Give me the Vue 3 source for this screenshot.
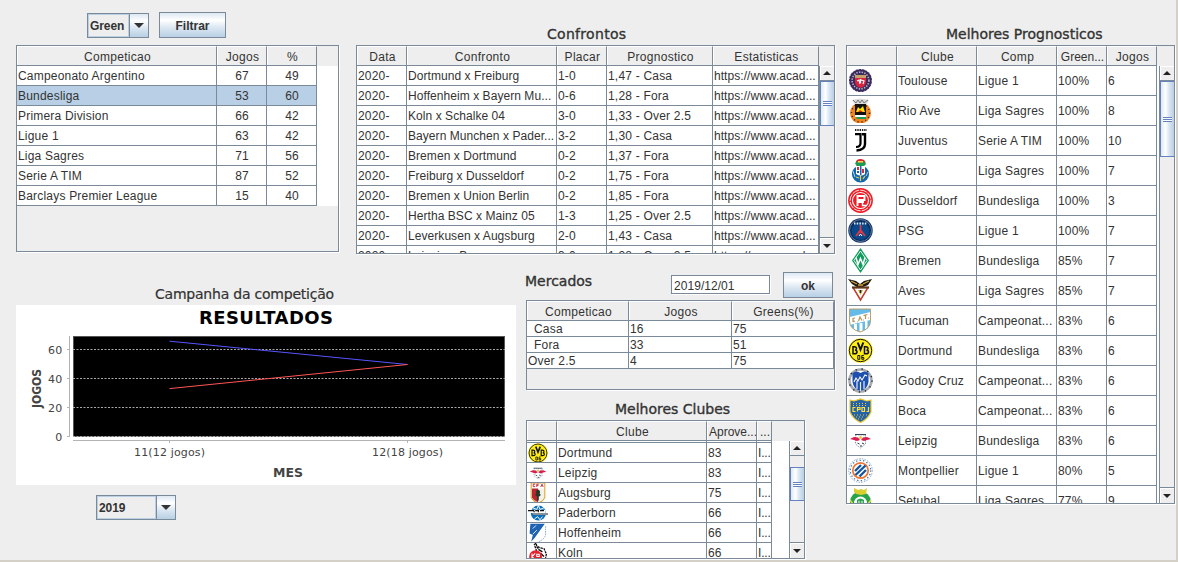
<script setup>
const competitions = [
  ['Campeonato Argentino', 67, 49],
  ['Bundesliga', 53, 60],
  ['Primera Division', 66, 42],
  ['Ligue 1', 63, 42],
  ['Liga Sagres', 71, 56],
  ['Serie A TIM', 87, 52],
  ['Barclays Premier League', 15, 40],
]

const matches = [
  ['Dortmund x Freiburg', '1-0', '1,47 - Casa'],
  ['Hoffenheim x Bayern Mu...', '0-6', '1,28 - Fora'],
  ['Koln x Schalke 04', '3-0', '1,33 - Over 2.5'],
  ['Bayern Munchen x Pader...', '3-2', '1,30 - Casa'],
  ['Bremen x Dortmund', '0-2', '1,37 - Fora'],
  ['Freiburg x Dusseldorf', '0-2', '1,75 - Fora'],
  ['Bremen x Union Berlin', '0-2', '1,85 - Fora'],
  ['Hertha BSC x Mainz 05', '1-3', '1,25 - Over 2.5'],
  ['Leverkusen x Augsburg', '2-0', '1,43 - Casa'],
  ['Leipzig x Bremen', '3-0', '1,28 - Over 2.5'],
]

const tips = [
  ['toulouse', 'Toulouse', 'Ligue 1', '100%', 6],
  ['rioave', 'Rio Ave', 'Liga Sagres', '100%', 8],
  ['juventus', 'Juventus', 'Serie A TIM', '100%', 10],
  ['porto', 'Porto', 'Liga Sagres', '100%', 7],
  ['dusseldorf', 'Dusseldorf', 'Bundesliga', '100%', 3],
  ['psg', 'PSG', 'Ligue 1', '100%', 7],
  ['bremen', 'Bremen', 'Bundesliga', '85%', 7],
  ['aves', 'Aves', 'Liga Sagres', '85%', 7],
  ['tucuman', 'Tucuman', 'Campeonat...', '83%', 6],
  ['dortmund', 'Dortmund', 'Bundesliga', '83%', 6],
  ['godoy', 'Godoy Cruz', 'Campeonat...', '83%', 6],
  ['boca', 'Boca', 'Campeonat...', '83%', 6],
  ['leipzig', 'Leipzig', 'Bundesliga', '83%', 6],
  ['montpellier', 'Montpellier', 'Ligue 1', '80%', 5],
  ['setubal', 'Setubal', 'Liga Sagres', '77%', 9],
]

const markets = [
  ['Casa', 16, 75],
  ['Fora', 33, 51],
  ['Over 2.5', 4, 75],
]

const clubs = [
  ['dortmund', 'Dortmund', 83],
  ['leipzig', 'Leipzig', 83],
  ['augsburg', 'Augsburg', 75],
  ['paderborn', 'Paderborn', 66],
  ['hoffenheim', 'Hoffenheim', 66],
  ['koln', 'Koln', 66],
]

const ticks = [
  [60, 44.5, 49],
  [40, 73.5, 78],
  [20, 102.5, 107],
  [0, 131.5, 136],
]
</script>

<template>
  <div class="window">
    <svg class="defs" width="0" height="0">
      <symbol id="toulouse" viewBox="0 0 25 25">
        <circle cx="12.5" cy="12.5" r="11.500" fill="#3b2a5c" />
        <circle cx="12.5" cy="12.5" r="11.500" fill="none" stroke="#fff" stroke-width="1" stroke-dasharray="1 2.4" />
        <circle cx="12.5" cy="12.5" r="8.4" fill="none" stroke="#b9b0c8" stroke-width="1.6" stroke-dasharray="1.4 1.3" />
        <path d="M7 7h11v7q0 4-5.5 6Q7 18 7 14z" fill="#d8243f" />
        <path d="M7 7h11v3H7z" fill="#c5a06a" />
        <path d="M9 13l2-1 1 4M13 12l3 1-1 3M12.500 11v4" stroke="#fff" stroke-width="1.200" fill="none" />
      </symbol>
      <symbol id="rioave" viewBox="0 0 25 25">
        <circle cx="12.500" cy="15" r="10.500" fill="#f08322" />
        <circle cx="12.500" cy="15" r="9" fill="none" stroke="#3a2208" stroke-width="1.400" stroke-dasharray="1 3" />
        <path d="M4 2q8-3 17 0l-3 5H7z" fill="#ddd" />
        <path d="M5 2l3 3 2-3 2 3 2-3 2 3 4-3" stroke="#777" fill="none" />
        <path d="M7 6h11v12H7z" fill="#111" />
        <path d="M8 14l2-5 2 2 3-3 2 6z" fill="#ffe000" />
        <path d="M10 14l2-2 3 2z" fill="#d22" />
        <path d="M7 17h11v2H7z" fill="#fff" />
        <path d="M8 19h10v2H9z" fill="#1c9a5b" />
      </symbol>
      <symbol id="juventus" viewBox="0 0 25 25">
        <path d="M7 2h12" stroke="#222" stroke-width="2" stroke-dasharray="1.400 .9" />
        <path d="M7 6.200H12.500V15Q12.500 19 8 19" fill="none" stroke="#000" stroke-width="2.200" />
        <path d="M14 6.200H17V16Q17 22 8.500 22.500" fill="none" stroke="#000" stroke-width="2.400" />
      </symbol>
      <symbol id="porto" viewBox="0 0 25 25">
        <circle cx="12.500" cy="16" r="8.600" fill="#1467a8" />
        <path d="M8 6q-1-5 5-5 6 1 4 6z" fill="#d5262e" />
        <path d="M7 5l3-2 3 2 3-2 2 3-3 3H9z" fill="#1e9c57" />
        <path d="M10 3h5v1.500h-5z" fill="#ffd84a" />
        <path d="M8 8h9v8q-4 3-9 0z" fill="#fff" />
        <path d="M9 9h2v3H9zM14 11h2v4h-2z" fill="#da2c36" />
        <path d="M12 8h1.500v9H12zM9 13h2v2H9z" fill="#1a60bf" />
        <path d="M12.500 17v6M8 19l3 1M17 18l-2 3" stroke="#e9cf5c" stroke-width="1.200" />
        <path d="M5 13l2 6M20 14l-2 4" stroke="#b7d6ec" />
      </symbol>
      <symbol id="dusseldorf" viewBox="0 0 25 25">
        <circle cx="12.500" cy="12.500" r="12.400" fill="#ee1c25" />
        <circle cx="12.500" cy="12.500" r="10.400" fill="none" stroke="#fff" stroke-width=".9" stroke-dasharray="7 1" />
        <circle cx="12.500" cy="12.500" r="8" fill="none" stroke="#fff" stroke-width="1.100" />
        <path d="M9.500 18V8H16.500v4h-6.500M10 14h6" fill="none" stroke="#fff" stroke-width="1.900" />
        <path d="M14.500 14v3.500h3.500" fill="none" stroke="#fff" stroke-width="1.400" />
      </symbol>
      <symbol id="psg" viewBox="0 0 25 25">
        <circle cx="12.500" cy="12.500" r="12.200" fill="#0e2d5c" />
        <circle cx="12.500" cy="12.500" r="11" fill="none" stroke="#7fa1c8" stroke-width=".7" />
        <circle cx="12.500" cy="13" r="9" fill="#08498b" />
        <path d="M6 5.500h13" stroke="#dbe5f0" stroke-width="2" stroke-dasharray="1.500 1.200" />
        <path d="M12.500 7v5L8 18M12.500 12l4.500 6M10 14.500h5" fill="none" stroke="#e9353f" stroke-width="1.700" />
        <path d="M11 18l1.500-2 1.500 2" stroke="#fff" fill="none" />
      </symbol>
      <symbol id="bremen" viewBox="0 0 25 25">
        <path d="M12.500 0L21 12.500 12.500 25 4 12.500z" fill="#109c5c" />
        <path d="M12.500 3L19 12.500 12.500 22 6 12.500z" fill="none" stroke="#fff" stroke-width=".9" />
        <path d="M8 9.500l2 7 2.500-6 2.500 6 2-7" fill="none" stroke="#fff" stroke-width="1.500" />
      </symbol>
      <symbol id="aves" viewBox="0 0 25 25">
        <path d="M0 1l8 2 4 3 4-3 8-2-4 6-5 2H9L4 6z" fill="#1a1712" />
        <path d="M3 3l6 3M21 3l-6 3M10 7h5" stroke="#d2a836" stroke-width="1.300" />
        <path d="M5 9.500h15L12.500 22z" fill="#fff" stroke="#c33b28" stroke-width="1.500" />
        <path d="M4 8.500h17v2H4z" fill="#5a3b1d" />
        <path d="M10 12h5l-2.500 5z" fill="#d6b02b" />
        <path d="M12.500 12v3" stroke="#222" stroke-width="1.500" />
      </symbol>
      <symbol id="tucuman" viewBox="0 0 25 25">
        <path d="M1.500 1h21v12q0 8-10.500 11Q1.500 21 1.500 13z" fill="#62bbe9" />
        <path d="M6 16h3v7l-3-2zM11.500 15h3v9h-3zM17 13h2.500v7L17 22z" fill="#fff" />
        <path d="M1.500 9L22.500 4v8L1.500 17z" fill="#fff" />
        <path d="M7 10l-2 .5v3l2-.5M10.500 13l1.500-4 2 3.500M15.500 7.500l4-1M17.500 7v4M9 14h.8M15 12h.8M20 10h.8" fill="none" stroke="#b5935b" stroke-width="1.200" />
        <path d="M1.500 1h21v12q0 8-10.500 11Q1.500 21 1.500 13z" fill="none" stroke="#b9a06f" />
      </symbol>
      <symbol id="dortmund" viewBox="0 0 25 25">
        <circle cx="12.500" cy="12.500" r="12.300" fill="#ffed18" />
        <circle cx="12.500" cy="12.500" r="11.200" fill="none" stroke="#111" stroke-width="1" />
        <path d="M5 8.800v7h1.500q2.500 0 2.500-1.800 0-1.700-2-1.700 1.500-.3 1.500-1.800t-2.200-1.700zM16.500 8.800v7h1.500q2.500 0 2.500-1.800 0-1.700-2-1.700 1.500-.3 1.500-1.800t-2.200-1.700z" fill="none" stroke="#111" stroke-width="1.500" />
        <path d="M9.700 4.500l2.800 7 2.800-7" fill="none" stroke="#111" stroke-width="2" />
        <path d="M9.800 17.500h2v3.800h-2zM13.800 21.300v-3.800h2M13.800 19.500h2v1.800h-2" fill="none" stroke="#111" stroke-width="1" />
      </symbol>
      <symbol id="godoy" viewBox="0 0 25 25">
        <circle cx="12.500" cy="12.500" r="11" fill="#fff" stroke="#a9adb3" stroke-width="2.600" />
        <circle cx="12.500" cy="12.500" r="11.500" fill="none" stroke="#222" stroke-width="1.400" stroke-dasharray="1.300 4.800" />
        <path d="M4.500 5q4-3 8 0 4-3 8 0v9q-1 7-8 9-7-2-8-9z" fill="#1d4fae" />
        <path d="M9 13v8M12.500 14v9M16 13v8" stroke="#e6ecf5" stroke-width="1.200" />
        <path d="M6 14l2-4 2 3 2-4 2 3 3-5 2 1" fill="none" stroke="#fff" stroke-width="1.100" />
      </symbol>
      <symbol id="boca" viewBox="0 0 25 25">
        <path d="M2 2l4 1 6.500-2L19 3l4-1v12q-3 7-10.500 10.500Q5 21 2 14z" fill="#2563a9" stroke="#ecc931" stroke-width="1.200" />
        <path d="M5 5.500h15M5 7.500h15M6 17h13M8 19h9M10 21h5" stroke="#ecc931" stroke-dasharray="1 2" />
        <path d="M7.500 9.500H5v4h2.500M9.500 13.500v-4H12v2H9.500M14 9.500v4h2.500v-4zM20.500 9v4.500H18.500" fill="none" stroke="#ffe044" stroke-width="1.200" />
      </symbol>
      <symbol id="leipzig" viewBox="0 0 25 25">
        <path d="M7.500 7h10v9l-5 4-5-4z" fill="#fff" stroke="#8f99ab" stroke-dasharray="1.500 1" />
        <path d="M7 6.500h11" stroke="#34465f" />
        <path d="M2 11l4-2 4 .5 2 2.500-3 1-3-1zM23 11l-4-2-4 .5-2 2.500 3 1 3-1z" fill="#d91d4e" />
        <circle cx="12.500" cy="9.500" r="1.500" fill="#f3c546" />
        <path d="M9.500 15l2 1M14 15l2 1M12 18h2" stroke="#23344e" />
      </symbol>
      <symbol id="montpellier" viewBox="0 0 25 25">
        <circle cx="12.500" cy="12.500" r="11.800" fill="#fff" stroke="#8aa9cc" stroke-width="1" stroke-dasharray="1.500 1.200" />
        <circle cx="12.500" cy="12.500" r="10.200" fill="none" stroke="#3e6ea4" stroke-width="1.200" stroke-dasharray="1.300 2.300" />
        <circle cx="12.500" cy="12.500" r="7.700" fill="#fff" stroke="#ee742e" stroke-width="1.700" />
        <path d="M7 13l6-6M7.500 17l10-9.500M11.500 18.500l6.500-6.500" stroke="#14569e" stroke-width="2.400" />
      </symbol>
      <symbol id="setubal" viewBox="0 0 25 25">
        <circle cx="12.500" cy="14" r="10.500" fill="#28a34a" />
        <path d="M0 7l6-5M25 7l-6-5" stroke="#fff" stroke-width="3" />
        <path d="M6 0l4 2 3-1 3 1 3-2-1 6-5 1-5-1-2-2z" fill="#d9cf2f" />
        <circle cx="12.500" cy="15" r="6.500" fill="#fff" />
        <path d="M9 12q3.500-3 7 0v5q-3 3-7 0z" fill="#2fa653" />
        <path d="M11 13v5M14 13v5" stroke="#fff" />
        <path d="M2 12l3 4M23 12l-3 4M4 20l3-2M21 20l-3-2" stroke="#e2dc54" stroke-width="1.500" />
      </symbol>
      <symbol id="augsburg" viewBox="0 0 25 25">
        <path d="M4 0h17v18q-2 5-8.500 7Q6 23 4 18z" fill="#fff" stroke="#dba63a" stroke-width="1.400" />
        <path d="M5 7h7.500v17Q7 22 5 18z" fill="#b82633" />
        <path d="M12.500 7H20v11q-2 4-7.500 6z" fill="#f4f1e6" />
        <path d="M9 1.500H6.500v3H9M11 5V1.500h2.500M11 3h2M16 5l1.500-3.500L19 5" fill="none" stroke="#c72b3c" stroke-width="1.200" />
        <path d="M12.500 8q4 2 2 5 3 2-1 4v5h-2v-5q-4-2-1-4-2-3 2-5z" fill="#24382a" />
      </symbol>
      <symbol id="paderborn" viewBox="0 0 25 25">
        <circle cx="13" cy="12.500" r="9.500" fill="#0c6fb9" />
        <path d="M6 6l5 2 2-5 2 5 5-2M8 20l4-3 3 4 3-4" fill="none" stroke="#fff" stroke-width="1.200" />
        <path d="M0 8.500h22v4H0z" fill="#fff" />
        <path d="M0 9.500h7l1 2M9 9.500h4v2M15 9.500h5" fill="none" stroke="#111" stroke-width="1.400" />
        <path d="M5 12.500h20v2.500H7z" fill="#8d9092" />
      </symbol>
      <symbol id="hoffenheim" viewBox="0 0 25 25">
        <path d="M3 1h18L8 19 4 23 6 15 2 13z" fill="#1e62b4" />
        <path d="M6 7l4-4M11 9l-5 5" stroke="#fff" stroke-width="1.100" />
        <path d="M22 4v11q-2 6-10 9" fill="none" stroke="#84a9d8" stroke-width="1.200" stroke-dasharray="2 1" />
      </symbol>
      <symbol id="koln" viewBox="0 0 25 25">
        <path d="M8 2l2-2 1 4 4 2 5 1 3 7-2 9h-5l-4-9z" fill="#fff" stroke="#111" stroke-width="1.600" stroke-dasharray="3 1" />
        <path d="M13 8l5 3M16 13l4 4M11 5l2 2" stroke="#111" stroke-width="1.800" />
        <circle cx="9.500" cy="17" r="8" fill="#e4232f" />
        <path d="M5 13v8M5 17l4-4M5 17l4 4M11 14h3v3h-3z" fill="none" stroke="#fff" stroke-width="1.300" />
      </symbol>
    </svg>

    <div class="main">
      <div class="top">
        <section class="filters">
          <div class="toolbar">
            <div class="combo combo-green"><span>Green</span><i class="drop"><b></b></i></div>
            <button class="btn btn-filter">Filtrar</button>
          </div>
          <div class="pane pane-comp">
            <div class="row head g-comp"><div>Competicao</div><div>Jogos</div><div>%</div></div>
            <div class="body">
              <div class="rows">
                <div v-for="(c, i) in competitions" :key="c[0]" class="row g-comp" :class="{ selected: i === 1 }">
                  <div>{{ c[0] }}</div><div class="mid">{{ c[1] }}</div><div class="mid">{{ c[2] }}</div>
                </div>
              </div>
            </div>
          </div>
        </section>

        <section class="matches">
          <h2>Confrontos</h2>
          <div class="pane pane-match">
            <div class="row head g-match">
              <div>Data</div><div>Confronto</div><div>Placar</div><div>Prognostico</div><div>Estatisticas</div>
            </div>
            <div class="body">
              <div class="rows">
                <div v-for="m in matches" :key="m[0]" class="row g-match">
                  <div>2020-</div><div class="fixture">{{ m[0] }}</div><div>{{ m[1] }}</div><div>{{ m[2] }}</div><div class="url">https://www.acad...</div>
                </div>
              </div>
              <div class="bar">
                <i class="arrow up"><b></b></i>
                <i class="thumb t-match"><b></b></i>
                <i class="arrow down"><b></b></i>
              </div>
            </div>
          </div>
        </section>
      </div>

      <div class="bottom">
        <section class="campaign">
          <h2>Campanha da competição</h2>
          <svg class="chart" width="500" height="180" viewBox="0 0 500 180">
            <rect width="500" height="180" fill="#fff" />
            <text x="183" y="19" class="title" textLength="134">RESULTADOS</text>
            <rect x="57.500" y="31.500" width="431" height="100" fill="#000" stroke="#555" />
            <g stroke="#a8a8a8" stroke-dasharray="2 1.500">
              <line v-for="t in ticks" :key="t[0]" x1="57" x2="489" :y1="t[1]" :y2="t[1]" />
            </g>
            <g stroke="#b4b4b4">
              <line v-for="t in ticks" :key="t[0]" x1="51" x2="54" :y1="t[1]" :y2="t[1]" />
              <path d="M53.500 31V132M57 135.500H489M153.500 136V138M391.500 136V138" fill="none" />
            </g>
            <path d="M153.500 36.200L391.500 59.500" stroke="#5555ff" stroke-width="1" />
            <path d="M153.500 83.600L391.500 59.500" stroke="#ff5555" stroke-width="1" />
            <text v-for="t in ticks" :key="t[0]" x="46.500" :y="t[2]" class="tick end">{{ t[0] }}</text>
            <text x="118" y="151" class="tick" textLength="71">11(12 jogos)</text>
            <text x="356" y="151" class="tick" textLength="71">12(18 jogos)</text>
            <text x="257" y="172" class="axis" textLength="30" lengthAdjust="spacingAndGlyphs">MES</text>
            <text transform="translate(25 103) rotate(-90)" class="axis" textLength="39" lengthAdjust="spacingAndGlyphs">JOGOS</text>
          </svg>
          <div class="combo combo-year"><span>2019</span><i class="drop"><b></b></i></div>
        </section>

        <section class="side">
          <div class="market-bar">
            <h2>Mercados</h2>
            <div class="field">2019/12/01</div>
            <button class="btn btn-ok">ok</button>
          </div>
          <div class="pane pane-market">
            <div class="row head g-market"><div>Competicao</div><div>Jogos</div><div>Greens(%)</div></div>
            <div class="body">
              <div class="rows">
                <div v-for="(m, i) in markets" :key="m[0]" class="row r16 g-market">
                  <div :class="{ indent: i < 2 }">{{ m[0] }}</div><div>{{ m[1] }}</div><div>{{ m[2] }}</div>
                </div>
              </div>
            </div>
          </div>
          <h2 class="clubs-title">Melhores Clubes</h2>
          <div class="pane pane-clubs">
            <div class="row head g-clubs"><div></div><div>Clube</div><div class="tight">Aprove...</div><div class="tight">...</div></div>
            <div class="body">
              <div class="rows">
                <div class="row sliver g-clubs"><div></div><div></div><div></div><div></div></div>
                <div v-for="c in clubs" :key="c[1]" class="row g-clubs">
                  <div><svg class="crest small"><use :href="'#' + c[0]" /></svg></div>
                  <div>{{ c[1] }}</div><div>{{ c[2] }}</div><div class="dots">I...</div>
                </div>
              </div>
              <div class="bar">
                <i class="arrow up"><b></b></i>
                <i class="thumb t-clubs"><b></b></i>
                <i class="arrow down"><b></b></i>
              </div>
            </div>
          </div>
        </section>
      </div>
    </div>

    <section class="tips">
      <h2>Melhores Prognosticos</h2>
      <div class="pane pane-tips">
        <div class="row head g-tips"><div></div><div>Clube</div><div>Comp</div><div class="tight">Green...</div><div>Jogos</div></div>
        <div class="body">
          <div class="rows">
            <div v-for="t in tips" :key="t[1]" class="row r30 g-tips">
              <div><svg class="crest"><use :href="'#' + t[0]" /></svg></div>
              <div>{{ t[1] }}</div><div>{{ t[2] }}</div><div>{{ t[3] }}</div><div>{{ t[4] }}</div>
            </div>
          </div>
          <div class="bar">
            <i class="arrow up"><b></b></i>
            <i class="thumb t-tips"><b></b></i>
            <i class="arrow down"><b></b></i>
          </div>
        </div>
      </div>
    </section>
  </div>
</template>

<style>
body { margin: 0; overflow: hidden; }
</style>

<style scoped>
.window {
  box-sizing: border-box;
  display: flex;
  width: 1178px;
  height: 562px;
  overflow: hidden;
  background: #eee;
  border-right: 2px solid #d4d0c8;
  border-bottom: 2px solid #d4d0c8;
  color: #333;
  font: 12px "Liberation Sans", Arial, sans-serif;
  letter-spacing: 0.2px;
}
.defs { width: 0; height: 0; flex: none; display: block; }
.main { width: 835px; flex: none; }
.top { display: flex; height: 254px; }
.bottom { display: flex; }
.filters { width: 323px; margin-left: 16px; }
.matches { width: 479px; margin-left: 17px; }
.campaign { width: 500px; margin-left: 16px; }
.side { width: 309px; margin-left: 10px; }
.tips { width: 329px; margin-left: 11px; }

h2 {
  margin: 0;
  height: 21px;
  font: 14px/20px "DejaVu Sans", sans-serif;
  letter-spacing: 0;
  -webkit-text-stroke: 0.35px #333;
  white-space: nowrap;
}
.matches h2 { padding: 24px 0 0 191px; letter-spacing: 0.3px; }
.tips h2 { padding: 24px 0 0 100px; }
.campaign h2 { padding: 30px 0 0 139px; letter-spacing: -0.22px; -webkit-text-stroke-width: 0.2px; }
.clubs-title { padding: 9px 0 0 89px; }

.toolbar {
  box-sizing: border-box;
  display: flex;
  gap: 10px;
  height: 45px;
  padding: 12px 0 0 71px;
}
.btn {
  box-sizing: border-box;
  height: 26px;
  padding: 1px 0 0;
  border: 1px solid #7a8a99;
  background: linear-gradient(#dde8f3, #fff 30%, #dce7f2 60%, #b8cfe5);
  color: #333;
  font: bold 12px "Liberation Sans", Arial, sans-serif;
}
.btn-filter { width: 67px; }
.btn-ok { width: 50px; margin-left: 13px; margin-top: 18px; }
.combo {
  box-sizing: border-box;
  display: flex;
  height: 25px;
  border: 1px solid #7a8a99;
  font-weight: bold;
  letter-spacing: -0.1px;
}
.combo span {
  box-sizing: border-box;
  flex: 1;
  border: 1px solid #b8cfe5;
  padding-left: 1px;
  line-height: 22px;
}
.combo-green { width: 62px; margin-top: 1px; }
.combo-year { width: 80px; margin: 10px 0 0 80px; }
.drop {
  display: flex;
  align-items: center;
  justify-content: center;
  width: 18px;
  border-left: 1px solid #7a8a99;
  background: linear-gradient(#dde8f3, #fff 30%, #dce7f2 60%, #b8cfe5);
}
.drop b {
  border: 5px solid transparent;
  border-top-color: #333;
  border-bottom: 0;
}

.pane {
  box-sizing: border-box;
  display: flex;
  flex-direction: column;
  border: 1px solid #7a8a99;
  box-shadow: 1px 1px 0 #fff;
}
.pane-comp { height: 207px; }
.pane-match { height: 209px; }
.pane-market { height: 90px; }
.pane-clubs { width: 279px; height: 139px; }
.pane-tips { height: 459px; }
.body { display: flex; flex: 1; min-height: 0; overflow: hidden; }
.rows { flex: 1; align-self: flex-start; background: #fff; }
.row { display: grid; grid-auto-rows: 20px; }
.row > div {
  box-sizing: border-box;
  overflow: hidden;
  padding-left: 1px;
  border-right: 1px solid #7a8a99;
  border-bottom: 1px solid #7a8a99;
  line-height: 21px;
  white-space: nowrap;
}
.r30 { grid-auto-rows: 30px; }
.r30 > div { line-height: 31px; }
.r16 { grid-auto-rows: 16px; }
.r16 > div { line-height: 17px; }
.sliver { grid-auto-rows: 2px; }
.head > div {
  padding-left: 2px;
  border-top: 1px solid #fff;
  box-shadow: inset 1px 0 0 #fff;
  text-align: center;
  line-height: 20px;
  letter-spacing: 0.3px;
}
.g-comp { grid-template-columns: 200px 50px 50px; }
.g-match { grid-template-columns: 50px 150px 50px 106px 106px; }
.g-market { grid-template-columns: 102px 103px 102px; }
.g-clubs { grid-template-columns: 30px 150px 50px 15px; }
.g-tips { grid-template-columns: 50px 80px 80px 50px 50px; }
.row > .mid { text-align: center; }
.row > .indent { padding-left: 7px; }
.head > .tight { padding-left: 2px; letter-spacing: 0; }
.row > .fixture { letter-spacing: 0.06px; }
.row > .url { letter-spacing: 0.05px; }
.row > .dots { letter-spacing: -0.2px; }
.selected > div { background: #b8cfe5; }

.market-bar { display: flex; height: 46px; }
.market-bar h2 { width: 146px; margin: 17px 0 0 -1px; }
.field {
  box-sizing: border-box;
  width: 99px;
  height: 19px;
  margin-top: 21px;
  padding-left: 2px;
  border: 1px solid #7a8a99;
  box-shadow: 1px 1px 0 #fff;
  background: #fff;
  line-height: 20px;
  letter-spacing: 0.05px;
}

.crest { display: block; width: 25px; height: 25px; margin: 2px 0 0; }
.crest.small { width: 20px; height: 20px; margin: 0; }

.bar {
  box-sizing: border-box;
  display: flex;
  flex-direction: column;
  width: 15px;
  border-left: 1px solid #7a8a99;
  background: #eee;
}
.arrow {
  box-sizing: border-box;
  display: flex;
  flex: none;
  align-items: center;
  justify-content: center;
  height: 15px;
  box-shadow: inset 1px 1px 0 #fff;
}
.up { border-bottom: 1px solid #7a8a99; }
.down { margin-top: auto; height: 16px; border-top: 1px solid #7a8a99; }
.arrow b { border: 4px solid transparent; }
.up b { border-bottom-color: #222; border-top: 0; }
.down b { border-top-color: #222; border-bottom: 0; }
.thumb {
  box-sizing: border-box;
  display: flex;
  flex: none;
  align-items: center;
  justify-content: center;
  border: 1px solid #6382bf;
  border-right: 0;
  background: linear-gradient(90deg, #dde8f3, #fff 35%, #dce7f2 60%, #b8cfe5);
}
.thumb b {
  width: 9px;
  height: 5px;
  background: linear-gradient(#6382bf 1px, #fff 1px 2px, #6382bf 2px 3px, #fff 3px 4px, #6382bf 4px);
}
.t-match { height: 45px; }
.t-tips { height: 76px; }
.t-clubs { height: 34px; margin-top: 11px; }

.chart { display: block; letter-spacing: 0; }
.title { font: bold 18px "DejaVu Sans", sans-serif; fill: #000; }
.tick { font: 11px "DejaVu Sans", sans-serif; fill: #444; }
.end { text-anchor: end; letter-spacing: 0.3px; }
.axis { font: bold 12px "DejaVu Sans", sans-serif; fill: #444; }
</style>
